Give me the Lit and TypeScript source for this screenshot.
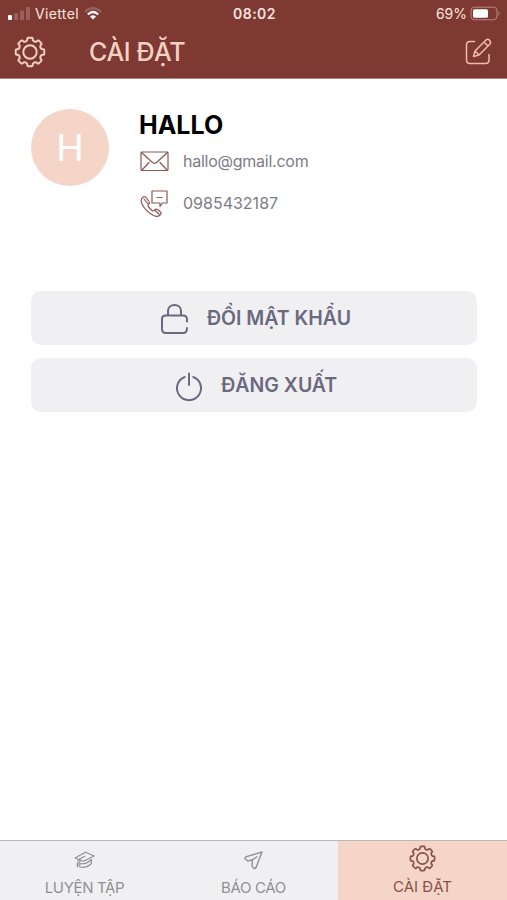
import { LitElement, html, svg, css } from "lit";
import { customElement, property } from "lit/decorators.js";

/** Outline of an eight-toothed gear centred in a 32x32 box. */
function gearPath(): string {
  const point = (radius: number, degrees: number) => {
    const a = (degrees * Math.PI) / 180;
    return `${(16 + radius * Math.cos(a)).toFixed(2)} ${(16 + radius * Math.sin(a)).toFixed(2)}`;
  };
  let d = "";
  for (let i = 0; i < 8; i++) {
    const c = i * 45 - 90;
    d += `${i ? "L" : "M"}${point(12.3, c - 13)}L${point(13, c - 12)}Q${point(14.4, c - 12)} ${point(14.4, c - 7)}`;
    d += `L${point(14.4, c + 7)}Q${point(14.4, c + 12)} ${point(13, c + 12)}L${point(12.3, c + 13)}`;
    d += `Q${point(10.6, c + 22.5)} ${point(12.3, c + 32)}`;
  }
  return d + "Z";
}

const icons = {
  gear: svg`<path d=${gearPath()}/><circle cx="16" cy="16" r="6.7"/>`,
  edit: svg`<path d="M11.500 4.500H7Q3.500 4.500 3.500 8V23Q3.500 26.500 7 26.500H22.500Q26 26.500 26 23V17.500"/>
    <path d="M10.500 19.500L12 14L23 3Q24.700 1.500 26.500 3.200T27 7L16 18Z M12 14L16 18M21 5L25 9"/>`,
  mail: svg`<rect x="1" y="1" width="27" height="18.500" rx="1"/>
    <path d="M1.500 1.500L12.500 11.500Q14.500 13 16.500 11.500L27.500 1.500M2 19L9 11.500M27 19L20 11.500"/>`,
  phone: svg`<path d="M12 1H27V13H22.500L20 16.500V13H12Z M17 7.500H18.200M19 7.500H20.200M21 7.500H22.200"/>
    <path d="M2.500 7.500Q4.500 5.500 6 7.500L9 11.500Q10 13 8.500 14.500Q7.500 15.500 8.500 17L12 20.500Q13.500 21.500 14.500 20Q16 18.500 17.500 19.500L20.500 22Q22 23.300 20 25Q17.500 27.500 13.500 25.500Q6 21.500 2.500 15Q-.200 10 2.500 7.500ZM4 9L7.500 13.500M15 20.500L19 24"/>`,
  lock: svg`<path d="M8 12.500V8C8 0 21 0 21 8V12.500M27 18.500V16.500Q27 12.500 23 12.500H5.500Q2 12.500 2 16V26Q2 30 6 30H23Q27 30 27 25"/>`,
  power: svg`<path d="M10.700 5A12 12 0 1 0 19.300 5M15 1.500V13"/>`,
  cap: svg`<path d="M1 7L11.500 1.200L20.300 5L9.500 10.300ZM4 8.500V15M3.300 16V12.500M5.800 9.500V12.500Q12 14 17.500 8.500V12.500Q12.500 17.500 5.800 16V12.500M10.800 5.300L5.500 8"/>`,
  plane: svg`<path d="M18 1L1.800 5.800Q.2 6.600 1.500 8.200L3 9.400Q4 10.200 5.500 9.700L8.500 8.700L8 14Q8 15.500 9.200 16.800Q10.700 18.300 12 16.500ZM8.500 8.700L13 5.800"/>`,
};

@customElement("line-icon")
class LineIcon extends LitElement {
  static styles = css`
    :host { display: block; flex: none; }
    svg { display: block; width: 100%; height: 100%; fill: none; stroke: currentColor;
      stroke-width: var(--line, 1.5); stroke-linecap: round; stroke-linejoin: round; overflow: visible; }
  `;
  @property() name: keyof typeof icons = "gear";
  @property() box = "0 0 32 32";
  render() {
    return html`<svg viewBox=${this.box}>${icons[this.name]}</svg>`;
  }
}

@customElement("app-root")
class AppRoot extends LitElement {
  static styles = css`
    :host { display: flex; flex-direction: column; height: 900px; width: 507px; overflow: hidden;
      background: #fff; font-family: Inter, "Noto Sans", sans-serif; white-space: nowrap; }
    header { background: #7e3933; color: #f6d2c5; height: 79px; box-sizing: border-box; border-bottom: 1px solid #b77f76; flex: none; }
    .status { display: grid; grid-template-columns: 1fr auto 1fr; align-items: center; height: 27px; padding: 0 6px 0 8px; color: #fbe5df; font-size: 14px; }
    .carrier { display: flex; align-items: center; }
    .carrier span { letter-spacing: 0.35px; }
    .signal { width: 22px; height: 13px; margin-right: 5px; }
    .wifi { width: 18px; height: 13px; margin-left: 5px; }
    .clock { font-weight: 600; letter-spacing: 0.5px; }
    .power { display: flex; align-items: center; justify-content: flex-end; gap: 3px; }
    .battery { width: 31px; height: 15px; }
    .bar { display: flex; align-items: center; height: 50px; padding: 0 14px; }
    .bar .gear { width: 32px; height: 32px; --line: 1.9; }
    .bar h1 { flex: 1; margin: 0 0 0 43px; font-size: 25px; line-height: 30px; font-weight: 500; letter-spacing: -0.4px; }
    .bar .edit { width: 30px; height: 30px; --line: 1.5; color: #efbcae; }
    main { flex: 1; padding: 30px 30.500px 0 31px; }
    .profile { display: flex; height: 182px; }
    .avatar { width: 78px; height: 77px; border-radius: 50%; background: #f4d5c8; color: #fff;
      display: flex; align-items: center; justify-content: center; font-size: 37px; font-weight: 400; }
    .details { margin-left: 30px; }
    .details h2 { margin: 0; font-size: 25px; line-height: 33px; font-weight: 700; color: #000; }
    .row { display: flex; align-items: center; height: 41.500px; color: #7d7c86; font-size: 16px; }
    .row line-icon { color: #8c5651; --line: 1.2; margin: 0 14px 0 1px; }
    .row.first { margin-top: -2px; height: 42.500px; }
    .row.first span { letter-spacing: -0.25px; }
    .mail { width: 29px; height: 21px; }
    .phone { width: 29px; height: 27px; }
    .action { display: flex; align-items: center; justify-content: center; height: 53.500px; margin-bottom: 13.500px; padding-left: 4px; box-sizing: border-box; border-radius: 10px;
      background: #f0f0f3; color: #6b6980; font-size: 19.500px; font-weight: 600; }
    .action line-icon { --line: 2; }
    .lock { width: 29px; height: 32px; margin: 2px 17.500px 0 0; }
    .switch { width: 30px; height: 30px; margin: 4px 17px 0 0; }
    nav { display: grid; grid-template-columns: 1fr 1fr 1fr; height: 60px; box-sizing: border-box; border-top: 1px solid #b9b8ba; background: #f0f0f2; }
    .tab { display: flex; flex-direction: column; align-items: center; justify-content: space-between; padding: 4px 0 3px; box-sizing: border-box;
      color: #909094; font-size: 15px; line-height: 18px; letter-spacing: -0.35px; --line: 1.1; }
    .active { background: #f4d5c8; color: #885149; letter-spacing: 0; --line: 2; }
    .active span { margin-bottom: 1px; }
    .cap { width: 21px; height: 18px; margin-top: 6px; }
    .plane { width: 19px; height: 19px; margin-top: 6px; --line: 1.35; }
    .tab .gear { width: 27px; height: 27px; }
  `;

  render() {
    return html`
      <header>
        <div class="status">
          <div class="carrier">
            <svg class="signal" viewBox="0 0 22 13" fill="currentColor">
              <rect x="0" y="8" width="4" height="5" rx="1" fill="#fff"/>
              <rect x="6" y="6" width="4" height="7" rx="1" opacity=".23"/>
              <rect x="12" y="3.500" width="4" height="9.500" rx="1" opacity=".23"/>
              <rect x="18" y="0" width="4" height="13" rx="1" opacity=".23"/>
            </svg>
            <span>Viettel</span>
            <svg class="wifi" viewBox="0 0 18 13" fill="none" stroke="#fff" stroke-width="2.200">
              <path d="M1 5Q9-2.500 17 5" opacity=".2"/><path d="M3.800 7.500Q9 2.500 14.200 7.500"/>
              <path d="M6 9.500Q9 7.200 12 9.500L9 12.600Z" fill="#fff" stroke="none"/>
            </svg>
          </div>
          <div class="clock">08:02</div>
          <div class="power"><span>69%</span>
            <svg class="battery" viewBox="0 0 31 15">
              <rect x="1" y="1.200" width="26" height="12.600" rx="3.500" fill="none" stroke="#b98780"/>
              <rect x="3" y="3.200" width="15" height="8.600" rx="1.500" fill="#fff"/>
              <path d="M28.500 5Q30.500 7.500 28.500 10Z" fill="#b98780"/>
            </svg>
          </div>
        </div>
        <div class="bar">
          <line-icon class="gear" name="gear"></line-icon>
          <h1>CÀI ĐẶT</h1>
          <line-icon class="edit" name="edit" box="0 0 30 30"></line-icon>
        </div>
      </header>
      <main>
        <section class="profile">
          <div class="avatar">H</div>
          <div class="details">
            <h2>HALLO</h2>
            <div class="row first"><line-icon class="mail" name="mail" box="0 0 29 21"></line-icon><span>hallo@gmail.com</span></div>
            <div class="row"><line-icon class="phone" name="phone" box="0 0 29 27"></line-icon><span>0985432187</span></div>
          </div>
        </section>
        <div class="action"><line-icon class="lock" name="lock" box="0 0 29 32"></line-icon><span>ĐỔI MẬT KHẨU</span></div>
        <div class="action"><line-icon class="switch" name="power" box="0 0 30 30"></line-icon><span>ĐĂNG XUẤT</span></div>
      </main>
      <nav>
        <div class="tab"><line-icon class="cap" name="cap" box="0 0 21 18"></line-icon><span>LUYỆN TẬP</span></div>
        <div class="tab"><line-icon class="plane" name="plane" box="0 0 19 19"></line-icon><span>BÁO CÁO</span></div>
        <div class="tab active"><line-icon class="gear" name="gear"></line-icon><span>CÀI ĐẶT</span></div>
      </nav>
    `;
  }
}
